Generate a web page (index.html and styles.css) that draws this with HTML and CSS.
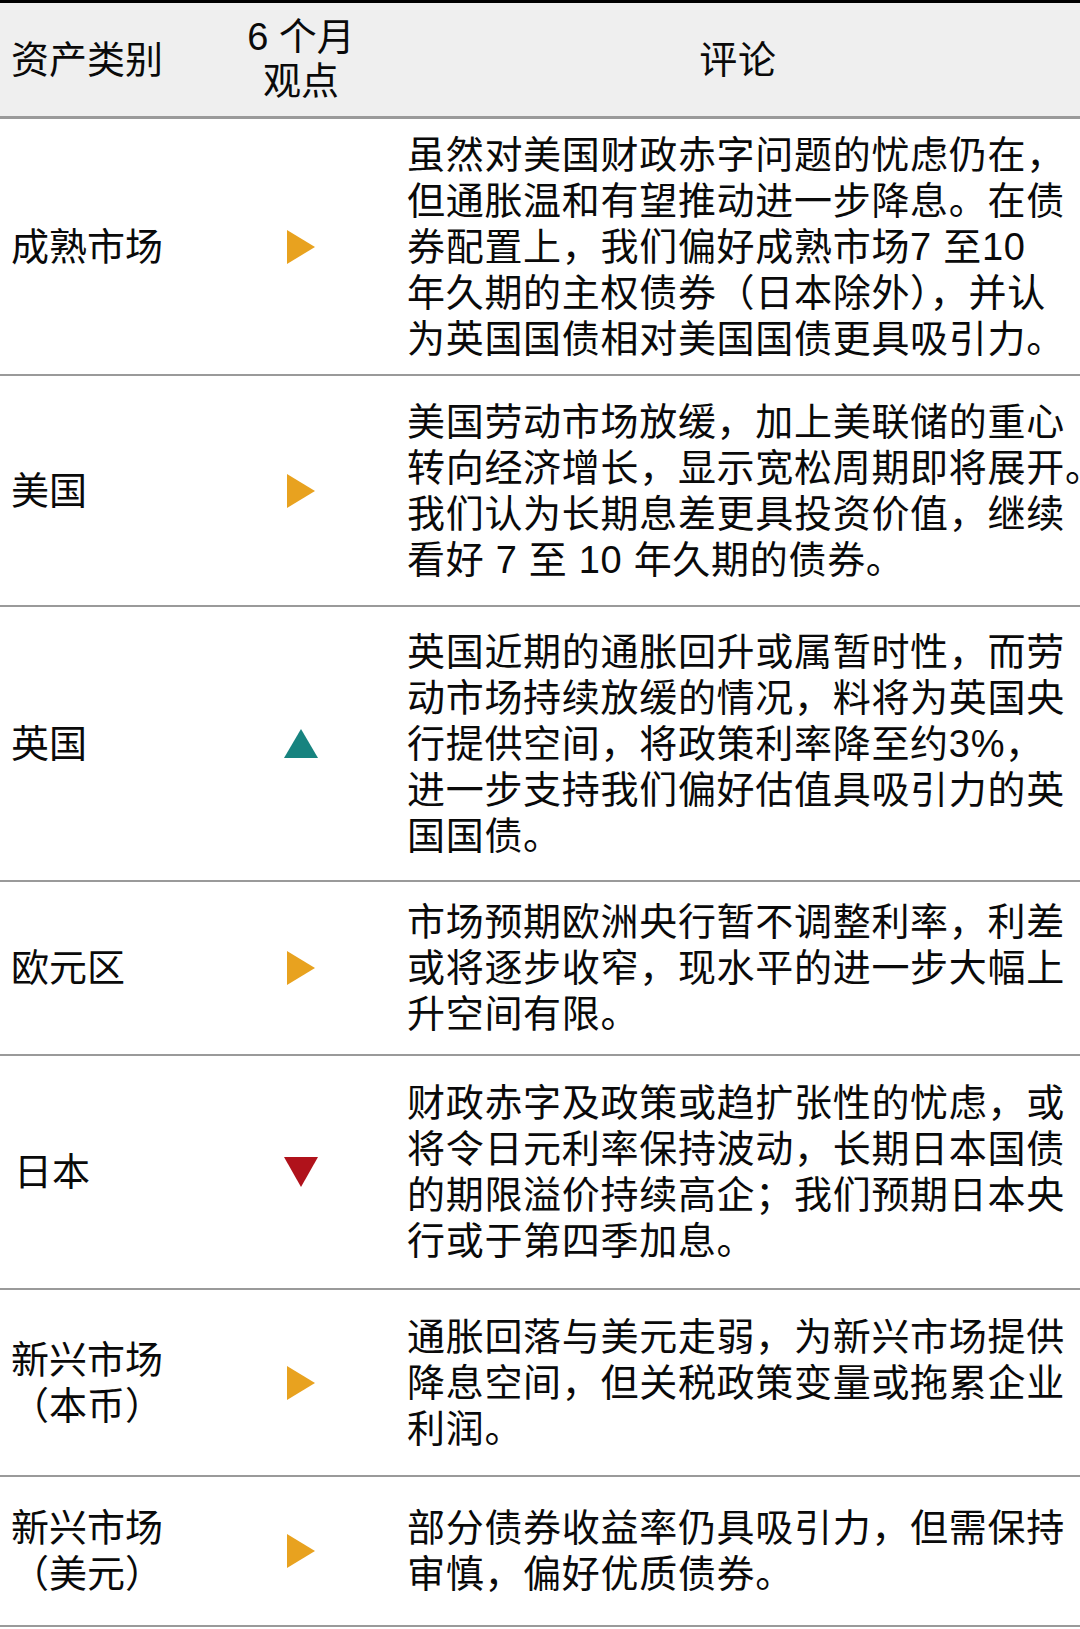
FILE: index.html
```html
<!DOCTYPE html>
<html lang="zh-CN">
<head>
<meta charset="utf-8">
<title>资产类别观点</title>
<link rel="stylesheet" href="styles.css">
</head>
<body>
<div class="table">
  <div class="row head">
    <div class="cell c-asset">资产类别</div>
    <div class="cell c-view">6 个月<br>观点</div>
    <div class="cell c-comment c-head-comment">评论</div>
  </div>

  <div class="row r1">
    <div class="cell c-asset">成熟市场</div>
    <div class="cell c-view"><svg class="tri" width="28" height="34" viewBox="0 0 28 34"><polygon class="t-neutral" points="0,0 28,17 0,34"/></svg></div>
    <div class="cell c-comment">虽然对美国财政赤字问题的忧虑仍在，<br>但通胀温和有望推动进一步降息。在债<br>券配置上，我们偏好成熟市场7 至10<br>年久期的主权债券（日本除外），并认<br>为英国国债相对美国国债更具吸引力。</div>
  </div>

  <div class="row r2">
    <div class="cell c-asset">美国</div>
    <div class="cell c-view"><svg class="tri" width="28" height="34" viewBox="0 0 28 34"><polygon class="t-neutral" points="0,0 28,17 0,34"/></svg></div>
    <div class="cell c-comment">美国劳动市场放缓，加上美联储的重心<br>转向经济增长，显示宽松周期即将展开。<br>我们认为长期息差更具投资价值，继续<br>看好 7 至 10 年久期的债券。</div>
  </div>

  <div class="row r3">
    <div class="cell c-asset">英国</div>
    <div class="cell c-view"><svg class="tri" width="34" height="29" viewBox="0 0 34 29"><polygon class="t-up" points="17,0 34,29 0,29"/></svg></div>
    <div class="cell c-comment">英国近期的通胀回升或属暂时性，而劳<br>动市场持续放缓的情况，料将为英国央<br>行提供空间，将政策利率降至约3%，<br>进一步支持我们偏好估值具吸引力的英<br>国国债。</div>
  </div>

  <div class="row r4">
    <div class="cell c-asset">欧元区</div>
    <div class="cell c-view"><svg class="tri" width="28" height="34" viewBox="0 0 28 34"><polygon class="t-neutral" points="0,0 28,17 0,34"/></svg></div>
    <div class="cell c-comment">市场预期欧洲央行暂不调整利率，利差<br>或将逐步收窄，现水平的进一步大幅上<br>升空间有限。</div>
  </div>

  <div class="row r5">
    <div class="cell c-asset c-indent">日本</div>
    <div class="cell c-view"><svg class="tri" width="34" height="30" viewBox="0 0 34 30"><polygon class="t-down" points="0,0 34,0 17,30"/></svg></div>
    <div class="cell c-comment">财政赤字及政策或趋扩张性的忧虑，或<br>将令日元利率保持波动，长期日本国债<br>的期限溢价持续高企；我们预期日本央<br>行或于第四季加息。</div>
  </div>

  <div class="row r6">
    <div class="cell c-asset">新兴市场<br>（本币）</div>
    <div class="cell c-view"><svg class="tri" width="28" height="34" viewBox="0 0 28 34"><polygon class="t-neutral" points="0,0 28,17 0,34"/></svg></div>
    <div class="cell c-comment">通胀回落与美元走弱，为新兴市场提供<br>降息空间，但关税政策变量或拖累企业<br>利润。</div>
  </div>

  <div class="row r7">
    <div class="cell c-asset">新兴市场<br>（美元）</div>
    <div class="cell c-view"><svg class="tri" width="28" height="34" viewBox="0 0 28 34"><polygon class="t-neutral" points="0,0 28,17 0,34"/></svg></div>
    <div class="cell c-comment">部分债券收益率仍具吸引力，但需保持<br>审慎，偏好优质债券。</div>
  </div>
</div>
</body>
</html>
```

FILE: styles.css
```css
html, body {
  margin: 0;
  padding: 0;
  background: #ffffff;
}

body {
  width: 1080px;
  overflow: hidden;
  font-family: "Liberation Sans", "Noto Sans CJK SC", sans-serif;
  font-size: 38px;
  line-height: 46px;
  color: #0a0a0a;
}

.table {
  display: flex;
  flex-direction: column;
  border-top: 3px solid #000000;
}

.row {
  display: grid;
  grid-template-columns: 240px 122px 1fr;
  align-items: center;
  border-bottom: 2px solid #9a9a9a;
  box-sizing: border-box;
}

.head {
  background: #efefef;
  height: 116px;
  border-bottom-width: 3px;
}

.r1 { height: 257px; }
.r2 { height: 231px; }
.r3 { height: 275px; }
.r4 { height: 174px; }
.r5 { height: 234px; }
.r6 { height: 187px; }
.r7 { height: 150px; }

.cell {
  white-space: nowrap;
}

.c-asset {
  padding-left: 11px;
}

.c-indent {
  padding-left: 14px;
}

.c-view {
  display: flex;
  flex-direction: column;
  align-items: center;
  justify-content: center;
  text-align: center;
}

.head .c-view {
  line-height: 44px;
  padding-bottom: 2px;
}

.c-comment {
  padding-left: 45px;
  overflow: hidden;
  letter-spacing: 0.7px;
}

.c-head-comment {
  padding-left: 0;
  text-align: center;
  text-indent: 34px;
}

.tri {
  display: block;
}

.t-neutral { fill: #e8a21f; }
.t-up { fill: #17837f; }
.t-down { fill: #b0121b; }
```
